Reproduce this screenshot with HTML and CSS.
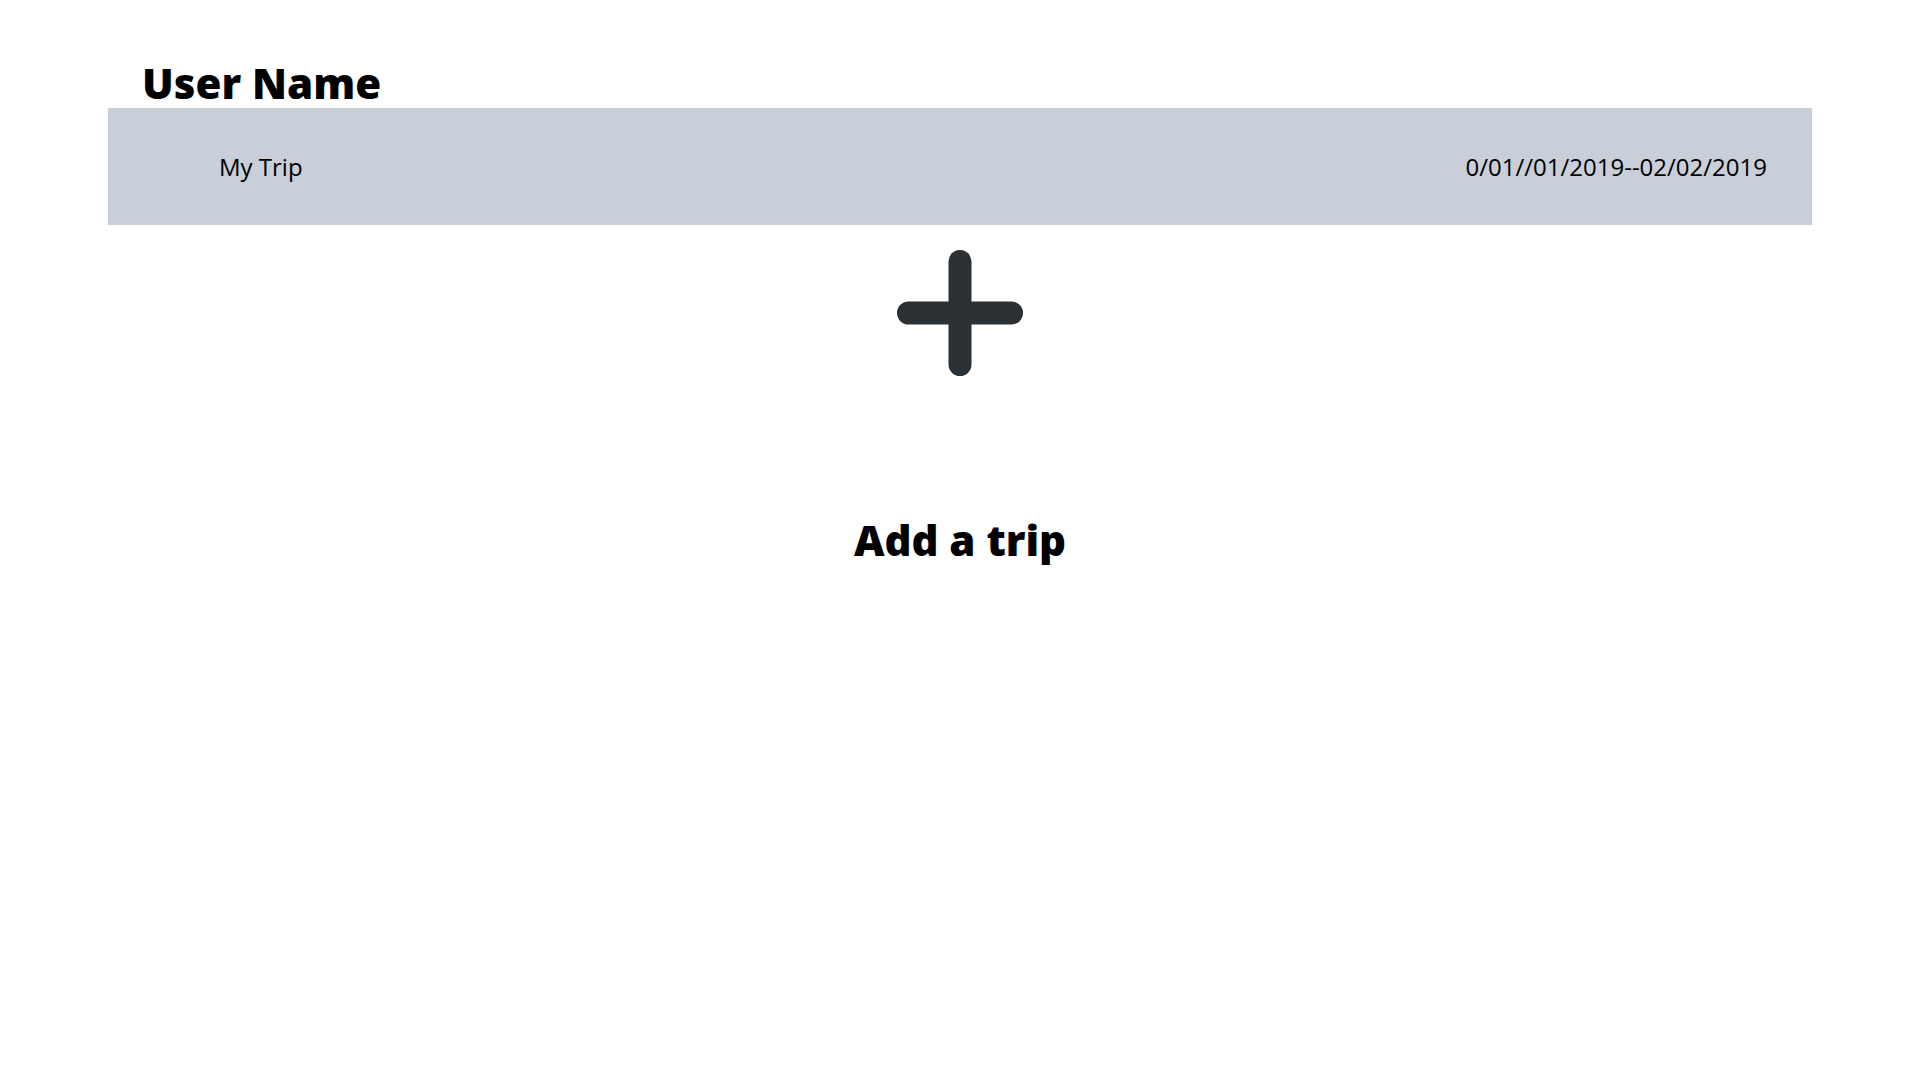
FILE: index.html
```html
<!DOCTYPE html>
<html>
<head>
<meta charset="utf-8">
<link rel="stylesheet" href="styles.css">
</head>
<body>
<div class="page">
  <h1 class="user-name">User Name</h1>
  <div class="trip-row">
    <span class="trip-name">My Trip</span>
    <span class="trip-dates">0/01//01/2019--02/02/2019</span>
  </div>
  <div class="add">
    <svg class="plus" width="126" height="126" viewBox="0 0 126 126">
      <line x1="63" y1="11.5" x2="63" y2="114.5" stroke="#2b3035" stroke-width="23" stroke-linecap="round"/>
      <line x1="11.5" y1="63" x2="114.5" y2="63" stroke="#2b3035" stroke-width="23" stroke-linecap="round"/>
    </svg>
    <h2 class="add-label">Add a trip</h2>
  </div>
</div>
</body>
</html>
```

FILE: styles.css
```css
html, body {
  margin: 0;
  padding: 0;
  background: #ffffff;
}
body {
  font-family: "Open Sans", "Liberation Sans", sans-serif;
  color: #000;
}
.page {
  padding: 58px 108px 0;
  display: flex;
  flex-direction: column;
}
.user-name {
  margin: 0 0 0 34px;
  font-size: 42px;
  line-height: 50px;
  font-weight: 800;
}
.trip-row {
  height: 117px;
  background: #c8cfd8;
  display: flex;
  align-items: center;
  justify-content: space-between;
  padding: 0 45px 0 111px;
  box-sizing: border-box;
  font-size: 24px;
}
.add {
  display: flex;
  flex-direction: column;
  align-items: center;
}
.plus {
  display: block;
  margin-top: 25px;
}
.add-label {
  margin: 139px 0 0;
  font-size: 42px;
  line-height: 50px;
  font-weight: 800;
}
```
